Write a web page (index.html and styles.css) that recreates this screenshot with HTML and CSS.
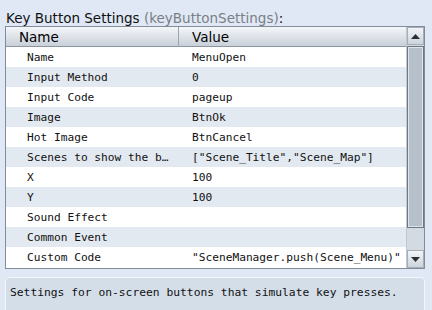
FILE: index.html
```html
<!DOCTYPE html>
<html>
<head>
<meta charset="utf-8">
<link rel="stylesheet" href="styles.css">
</head>
<body>
<div class="page">
  <div class="title">Key Button Settings <span class="key">(keyButtonSettings)</span>:</div>
  <div class="grid-box">
    <div class="list">
      <div class="head">
        <div class="hcell hname">Name</div>
        <div class="hcell hvalue">Value</div>
      </div>
      <div class="row"><div class="c1">Name</div><div class="c2">MenuOpen</div></div>
      <div class="row alt"><div class="c1">Input Method</div><div class="c2">0</div></div>
      <div class="row"><div class="c1">Input Code</div><div class="c2">pageup</div></div>
      <div class="row alt"><div class="c1">Image</div><div class="c2">BtnOk</div></div>
      <div class="row"><div class="c1">Hot Image</div><div class="c2">BtnCancel</div></div>
      <div class="row alt"><div class="c1">Scenes to show the b…</div><div class="c2">["Scene_Title","Scene_Map"]</div></div>
      <div class="row"><div class="c1">X</div><div class="c2">100</div></div>
      <div class="row alt"><div class="c1">Y</div><div class="c2">100</div></div>
      <div class="row"><div class="c1">Sound Effect</div><div class="c2"></div></div>
      <div class="row alt"><div class="c1">Common Event</div><div class="c2"></div></div>
      <div class="row"><div class="c1">Custom Code</div><div class="c2">"SceneManager.push(Scene_Menu)"</div></div>
    </div>
    <div class="scrollbar">
      <div class="sbtn"><svg width="9" height="5" viewBox="0 0 9 5"><path d="M0 5 L4.5 0 L9 5 Z" fill="#2b2f35"/></svg></div>
      <div class="track"><div class="thumb"></div></div>
      <div class="sbtn"><svg width="9" height="5" viewBox="0 0 9 5"><path d="M0 0 L4.5 5 L9 0 Z" fill="#2b2f35"/></svg></div>
    </div>
  </div>
  <div class="desc">Settings for on-screen buttons that simulate key presses.</div>
</div>
</body>
</html>
```
FILE: styles.css
```css
html, body {
  margin: 0;
  padding: 0;
  background: #dfe8f4;
}
.page {
  width: 432px;
  height: 310px;
  overflow: hidden;
  padding: 10px 0 0 5px;
  box-sizing: border-box;
}
.title {
  font-family: "DejaVu Sans", sans-serif;
  font-size: 13.5px;
  line-height: 16px;
  color: #111;
  padding-left: 1px;
}
.key {
  color: #7a7f86;
}
.grid-box {
  width: 420px;
  height: 243px;
  box-sizing: border-box;
  border: 1px solid #838d99;
  background: #fff;
  display: flex;
}
.list {
  flex: 1;
  display: flex;
  flex-direction: column;
}
.head {
  height: 20px;
  box-sizing: border-box;
  display: grid;
  grid-template-columns: 173px 1fr;
  background: linear-gradient(#f4f6f9, #c9d0d9);
  border-bottom: 1px solid #8c96a1;
}
.hcell {
  font-family: "DejaVu Sans", sans-serif;
  font-size: 13.5px;
  line-height: 20px;
  color: #000;
  padding-left: 13px;
}
.hname {
  border-right: 1px solid #9ba4ae;
}
.row {
  height: 20px;
  box-sizing: border-box;
  padding-top: 2px;
  display: grid;
  grid-template-columns: 174px 1fr;
  font-family: "DejaVu Sans Mono", monospace;
  font-size: 11.2px;
  line-height: 18px;
  color: #111;
  background: #fff;
  white-space: nowrap;
}
.row.alt {
  background: #e3e9f0;
}
.c1 {
  padding-left: 21px;
  overflow: hidden;
}
.c2 {
  padding-left: 12px;
  overflow: hidden;
}
.scrollbar {
  width: 17px;
  display: flex;
  flex-direction: column;
  background: #d3dae2;
  border-left: 1px solid #c0c8d1;
}
.sbtn {
  height: 18px;
  display: flex;
  align-items: center;
  justify-content: center;
  background: linear-gradient(#f2f4f7, #cdd4dc);
  border: 1px solid #a4adb8;
  box-sizing: border-box;
}
.track {
  flex: 1;
  padding: 1px 0;
  display: flex;
  flex-direction: column;
}
.thumb {
  height: 182px;
  box-sizing: border-box;
  border: 1px solid #6e7884;
  box-shadow: inset 0 0 0 1px #dfe4ea;
  background: #b6c0cb;
}
.desc {
  margin-top: 8px;
  width: 420px;
  height: 60px;
  box-sizing: border-box;
  border: 1px solid #f4f7fb;
  border-radius: 4px;
  background: #d4dee9;
  padding: 7px 0 0 4px;
  font-family: "DejaVu Sans Mono", monospace;
  font-size: 11.3px;
  line-height: 16px;
  color: #111;
}
```
